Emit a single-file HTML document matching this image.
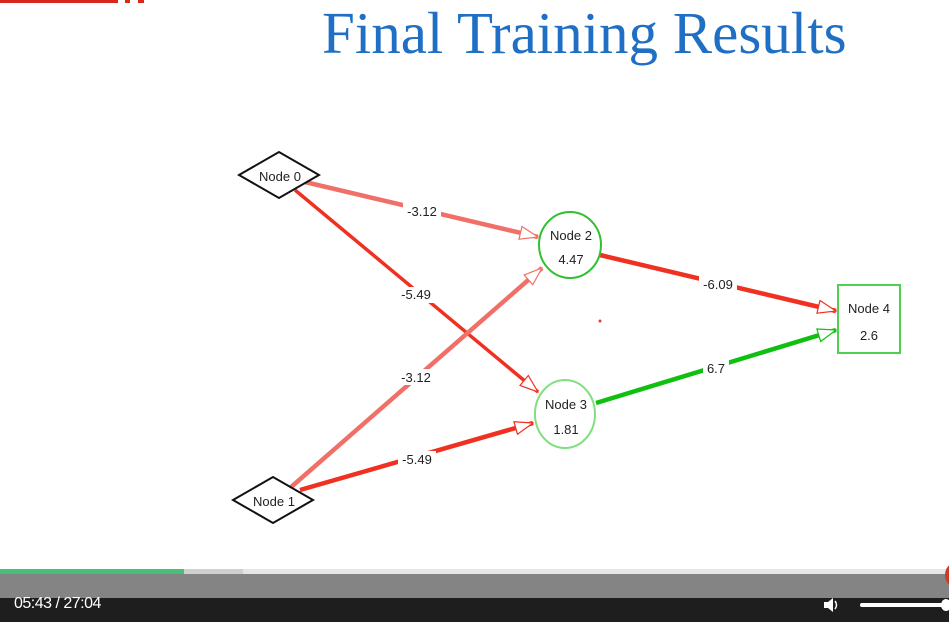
<!DOCTYPE html>
<html><head><style>
body{margin:0;width:949px;height:622px;overflow:hidden;background:#fff;position:relative;font-family:"Liberation Sans",sans-serif}
.t{position:absolute;left:322px;top:-1px;font-family:"Liberation Serif",serif;font-size:59px;color:#1f6fc4;white-space:nowrap}
</style></head><body>
<div style="position:absolute;left:0;top:0;width:118px;height:3px;background:#d8281c"></div>
<div style="position:absolute;left:125px;top:0;width:5px;height:3px;background:#d8281c"></div>
<div style="position:absolute;left:138px;top:0;width:6px;height:3px;background:#d8281c"></div>
<div class="t">Final Training Results</div>
<svg width="949" height="622" style="position:absolute;left:0;top:0" font-family="Liberation Sans, sans-serif" font-size="13" fill="#222">
<defs>
<marker id="a1" markerWidth="20" markerHeight="16" refX="19" refY="8" orient="auto" markerUnits="userSpaceOnUse"><path d="M1,1.5 L19,8 L1,14.5 Z" fill="#fff" stroke="#f07068" stroke-width="1.2"/></marker>
<marker id="a2" markerWidth="20" markerHeight="16" refX="19" refY="8" orient="auto" markerUnits="userSpaceOnUse"><path d="M1,1.5 L19,8 L1,14.5 Z" fill="#fff" stroke="#f03020" stroke-width="1.2"/></marker>
<marker id="a3" markerWidth="20" markerHeight="16" refX="19" refY="8" orient="auto" markerUnits="userSpaceOnUse"><path d="M1,1.5 L19,8 L1,14.5 Z" fill="#fff" stroke="#10c010" stroke-width="1.2"/></marker>
</defs>
<g stroke-width="4.5" fill="none">
<line x1="305" y1="182" x2="538" y2="237" stroke="#f07068" marker-end="url(#a1)"/>
<line x1="295" y1="190" x2="538" y2="392" stroke="#f03020" stroke-width="3.5" marker-end="url(#a2)"/>
<line x1="290" y1="488" x2="542" y2="268" stroke="#f07068" marker-end="url(#a1)"/>
<line x1="300" y1="490" x2="533" y2="423" stroke="#f03020" marker-end="url(#a2)"/>
<line x1="600" y1="255" x2="836" y2="311" stroke="#f03020" marker-end="url(#a2)"/>
<line x1="596" y1="403" x2="836" y2="330" stroke="#10c010" marker-end="url(#a3)"/>
</g>
<g fill="#fff">
<rect x="403" y="203" width="38" height="16"/><rect x="397" y="287" width="38" height="16"/>
<rect x="397" y="369" width="38" height="16"/><rect x="398" y="451" width="38" height="16"/>
<rect x="699" y="276" width="38" height="16"/><rect x="703" y="360" width="26" height="16"/>
</g>
<g text-anchor="middle">
<text x="422" y="216">-3.12</text><text x="416" y="299">-5.49</text>
<text x="416" y="382">-3.12</text><text x="417" y="464">-5.49</text>
<text x="718" y="289">-6.09</text><text x="716" y="373">6.7</text>
</g>
<path d="M239,175 L279,152 L319,175 L279,198 Z" fill="#fff" stroke="#111" stroke-width="2"/>
<text x="280" y="181" text-anchor="middle">Node 0</text>
<path d="M233,500 L273,477 L313,500 L273,523 Z" fill="#fff" stroke="#111" stroke-width="2"/>
<text x="274" y="506" text-anchor="middle">Node 1</text>
<ellipse cx="570" cy="245" rx="31" ry="33" fill="#fff" stroke="#30c030" stroke-width="2"/>
<text x="571" y="240" text-anchor="middle">Node 2</text><text x="571" y="264" text-anchor="middle">4.47</text>
<ellipse cx="565" cy="414" rx="30" ry="34" fill="#fff" stroke="#80e080" stroke-width="2"/>
<text x="566" y="409" text-anchor="middle">Node 3</text><text x="566" y="434" text-anchor="middle">1.81</text>
<rect x="838" y="285" width="62" height="68" fill="#fff" stroke="#50d050" stroke-width="2"/>
<text x="869" y="313" text-anchor="middle">Node 4</text><text x="869" y="340" text-anchor="middle">2.6</text>
<circle cx="600" cy="321" r="1.5" fill="#e04040"/>
</svg>
<div style="position:absolute;left:0;top:569px;width:949px;height:5px;background:#e6e6e6"></div>
<div style="position:absolute;left:184px;top:569px;width:59px;height:5px;background:#d0d0d0"></div>
<div style="position:absolute;left:0;top:569px;width:184px;height:5px;background:#48c078"></div>
<div style="position:absolute;left:0;top:574px;width:949px;height:24px;background:#848484"></div>
<div style="position:absolute;left:0;top:598px;width:949px;height:24px;background:#1e1e1e"></div>
<div style="position:absolute;left:945px;top:563px;width:20px;height:24px;border-radius:50%;background:#c83a2a"></div>
<div style="position:absolute;left:14px;top:595px;color:#fff;font-size:16px;letter-spacing:-0.5px">05:43 / 27:04</div>
<svg width="20" height="20" style="position:absolute;left:822px;top:595px"><path d="M2,7 H6 L11,3 V17 L6,13 H2 Z" fill="#fff"/><path d="M13,6 Q16,10 13,14" stroke="#fff" stroke-width="1.5" fill="none"/></svg>
<div style="position:absolute;left:860px;top:603px;width:89px;height:4px;border-radius:2px;background:#fff"></div>
<div style="position:absolute;left:941px;top:599px;width:10px;height:12px;border-radius:50%;background:#fff"></div>
</body></html>
